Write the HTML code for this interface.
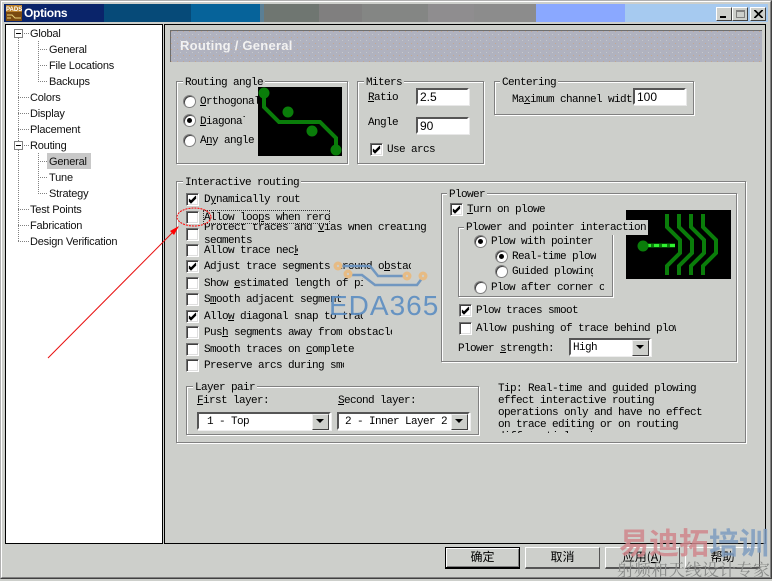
<!DOCTYPE html>
<html><head><meta charset="utf-8"><style>
html,body{margin:0;padding:0}
body{width:772px;height:579px;overflow:hidden;position:relative;background:#cdcfcb;font-family:"Liberation Mono","Noto Sans CJK SC",monospace;font-size:11px;letter-spacing:-.6px;color:#000}
div,span.a{position:absolute;box-sizing:border-box}
.t{white-space:nowrap;overflow:hidden;height:15px;line-height:16px}
.s{font-family:"Liberation Sans",sans-serif;font-size:11px;letter-spacing:-.2px;color:#111;white-space:nowrap;height:17px;line-height:18px}
.g{border:1px solid #808080;box-shadow:1px 1px 0 #fff,inset 1px 1px 0 #fff}
.l{background:#cdcfcb;padding:0 2px;white-space:nowrap;height:15px;line-height:16px}
.c{width:13px;height:13px;background:#fff;border:1px solid;border-color:#707070 #fff #fff #707070;box-shadow:inset 1px 1px 0 #404040,inset -1px -1px 0 #dfdfdf}
.c svg{position:absolute;left:1px;top:1px}
.r{width:13px;height:13px;border-radius:50%;background:#fff;border:1px solid #808080;box-shadow:inset 1px 1px 0 #404040}
.r.on::after{content:"";position:absolute;left:3px;top:3px;width:5px;height:5px;border-radius:50%;background:#000}
.i{background:#fff;border:2px solid;border-color:#555 #fff #fff #555;outline:0;box-shadow:1px 1px 0 #e8e8e8;font-family:"Liberation Sans",sans-serif;font-size:12px;letter-spacing:0;line-height:14px;padding-left:2px}
.sel{background:#fff;border:2px solid;border-color:#555 #fff #fff #555;box-shadow:1px 1px 0 #eee;height:18px}
.sel b{position:absolute;right:0;top:0;width:15px;height:14px;background:#cdcfcb;border:1px solid;border-color:#eee #404040 #404040 #eee}
.sel b::after{content:"";position:absolute;left:3px;top:4px;border:4px solid transparent;border-top:4px solid #000;border-bottom:0}
.b{top:547px;height:22px;border:1px solid #808080;border-top-color:#fff;border-left-color:#fff;border-bottom:2px solid #555;border-right:1px solid #555;font-family:"Noto Sans CJK SC",sans-serif;font-size:12px;letter-spacing:0;text-align:center;line-height:18px;color:#000}
u{text-decoration:underline}
</style></head><body>
<!-- window frame -->
<div style="left:0;top:0;width:772px;height:579px;border:1px solid #b0b0b0;border-right-color:#404040;border-bottom-color:#404040"></div>
<div style="left:1px;top:1px;width:770px;height:577px;border:1px solid #fff;border-right-color:#808080;border-bottom-color:#808080"></div>
<!-- title bar -->
<div style="left:4px;top:4px;width:100px;height:18px;background:#0a246a"></div>
<div style="left:104px;top:4px;width:87px;height:18px;background:#064a78"></div>
<div style="left:191px;top:4px;width:69px;height:18px;background:#06639a"></div>
<div style="left:260px;top:4px;width:4px;height:18px;background:#5a7f95"></div>
<div style="left:264px;top:4px;width:55px;height:18px;background:#6f7671"></div>
<div style="left:319px;top:4px;width:43px;height:18px;background:#807f7f"></div>
<div style="left:362px;top:4px;width:66px;height:18px;background:#848684"></div>
<div style="left:428px;top:4px;width:46px;height:18px;background:#8f8d8f"></div>
<div style="left:474px;top:4px;width:62px;height:18px;background:#8c8c8c"></div>
<div style="left:536px;top:4px;width:89px;height:18px;background:#8aa8ff"></div>
<div style="left:625px;top:4px;width:143px;height:18px;background:#a6caf0"></div>
<svg style="position:absolute;left:6px;top:5px" width="16" height="16"><rect width="16" height="16" fill="#7a4a10"/><rect y="0" width="16" height="7" fill="#b9802a"/><text x="0" y="6" font-family="Liberation Sans" font-size="6" font-weight="bold" fill="#fff" letter-spacing="0">PADS</text><path d="M1 10h5l3 3h6M1 13h4" stroke="#e8d27a" fill="none"/></svg>
<div style="left:24px;top:5px;height:16px;font:bold 12px/16px 'Liberation Sans',sans-serif;letter-spacing:-.3px;color:#fff">Options</div>
<div style="left:716px;top:7px;width:16px;height:14px;background:#cdcfcb;border:1px solid;border-color:#fff #404040 #404040 #fff"><span class="a" style="left:3px;bottom:2px;width:6px;height:2px;background:#000"></span></div>
<div style="left:732px;top:7px;width:16px;height:14px;background:#cdcfcb;border:1px solid;border-color:#fff #404040 #404040 #fff"><span class="a" style="left:3px;top:2px;width:9px;height:8px;border:1px solid #808080;border-top-width:2px"></span></div>
<div style="left:750px;top:7px;width:16px;height:14px;background:#cdcfcb;border:1px solid;border-color:#fff #404040 #404040 #fff"><svg style="position:absolute;left:3px;top:2px" width="9" height="8"><path d="M0 0L8 8M1 0L9 8M8 0L0 8M9 0L1 8" stroke="#000"/></svg></div>
<!-- tree -->
<div style="left:5px;top:24px;width:158px;height:520px;background:#fff;border:1px solid #000"></div>
<svg style="position:absolute;left:0;top:0" width="165" height="260">
<g stroke="#808080" stroke-dasharray="1 1" fill="none"><path d="M18.5 38V241M24 33.5h5M18 97.5h11M18 113.5h11M18 129.5h11M24 145.5h5M18 209.5h11M18 225.5h11M18 241.5h11"/><path d="M38.5 41V81M38 49.5h9M38 65.5h9M38 81.5h9M38.5 153V193M38 161.5h9M38 177.5h9M38 193.5h9"/></g>
<g fill="#fff" stroke="#808080"><rect x="14.500" y="29.500" width="8" height="8"/><rect x="14.500" y="141.500" width="8" height="8"/></g>
<path d="M16 33.500h5M16 145.500h5" stroke="#000"/>
</svg>
<div style="left:47px;top:153px;width:44px;height:16px;background:#c8c8c8"></div>
<div class="s" style="left:30px;top:25px">Global</div>
<div class="s" style="left:49px;top:41px">General</div>
<div class="s" style="left:49px;top:57px">File Locations</div>
<div class="s" style="left:49px;top:73px">Backups</div>
<div class="s" style="left:30px;top:89px">Colors</div>
<div class="s" style="left:30px;top:105px">Display</div>
<div class="s" style="left:30px;top:121px">Placement</div>
<div class="s" style="left:30px;top:137px">Routing</div>
<div class="s" style="left:49px;top:153px">General</div>
<div class="s" style="left:49px;top:169px">Tune</div>
<div class="s" style="left:49px;top:185px">Strategy</div>
<div class="s" style="left:30px;top:201px">Test Points</div>
<div class="s" style="left:30px;top:217px">Fabrication</div>
<div class="s" style="left:30px;top:233px">Design Verification</div>
<!-- right panel -->
<div style="left:164px;top:24px;width:602px;height:520px;border:1px solid #000;border-left-width:1px"></div>
<svg style="position:absolute;left:170px;top:30px" width="592" height="32"><defs><pattern id="d" width="6" height="6" patternUnits="userSpaceOnUse"><rect width="6" height="6" fill="#b0b2bf"/><rect x="1" y="1" width="1" height="1" fill="#c4a890"/><rect x="4" y="4" width="1" height="1" fill="#c6c8cc"/></pattern></defs><rect width="592" height="32" fill="url(#d)"/><path d="M0 .5H592M.5 0V32" stroke="#6e6e6e"/></svg>
<div style="left:180px;top:38px;height:16px;font:bold 13px/16px 'Liberation Sans',sans-serif;letter-spacing:.25px;color:#f2f2f2;white-space:nowrap">Routing / General</div>

<!-- Routing angle -->
<div class="g" style="left:176px;top:81px;width:172px;height:83px"></div>
<div class="l" style="left:183px;top:75px">Routing angle</div>
<div class="r" style="left:183px;top:95px"></div><div class="t" style="left:200px;top:94px;width:58px"><u>O</u>rthogonal</div>
<div class="r on" style="left:183px;top:114px"></div><div class="t" style="left:200px;top:114px;width:45px"><u>D</u>iagonal</div>
<div class="r" style="left:183px;top:134px"></div><div class="t" style="left:200px;top:133px">A<u>n</u>y angle</div>
<svg style="position:absolute;left:258px;top:87px" width="84" height="69"><rect width="84" height="69" fill="#000"/><path d="M6 6V20L21 35H62L78 51V63" stroke="#0a7d0a" stroke-width="4" fill="none"/><g fill="#0a7d0a"><circle cx="6" cy="6" r="5.500"/><circle cx="30" cy="25" r="5.500"/><circle cx="54" cy="44" r="5.500"/><circle cx="78" cy="63" r="5.500"/></g></svg>

<!-- Miters -->
<div class="g" style="left:357px;top:81px;width:127px;height:83px"></div>
<div class="l" style="left:364px;top:75px">Miters</div>
<div class="t" style="left:368px;top:90px"><u>R</u>atio</div>
<div class="t" style="left:368px;top:115px">An<u>g</u>le</div>
<div class="i" style="left:416px;top:88px;width:53px;height:17px">2.5</div>
<div class="i" style="left:416px;top:117px;width:53px;height:17px">90</div>
<div class="c" style="left:370px;top:143px"><svg width="9" height="9"><path d="M1 4l2 2 5-5M1 5l2 2 5-5M1 6l2 2 5-5" stroke="#000" fill="none"/></svg></div>
<div class="t" style="left:387px;top:142px">Use arcs</div>

<!-- Centering -->
<div class="g" style="left:494px;top:81px;width:200px;height:34px"></div>
<div class="l" style="left:500px;top:75px">Centering</div>
<div class="t" style="left:512px;top:92px;width:121px">Ma<u>x</u>imum channel width</div>
<div class="i" style="left:633px;top:88px;width:53px;height:17px">100</div>

<!-- Interactive routing -->
<div class="g" style="left:176px;top:181px;width:570px;height:262px"></div>
<div class="l" style="left:183px;top:175px">Interactive routing</div>

<div class="c" style="left:186px;top:193px"><svg width="9" height="9"><path d="M1 4l2 2 5-5M1 5l2 2 5-5M1 6l2 2 5-5" stroke="#000" fill="none"/></svg></div>
<div class="t" style="left:204px;top:192px;width:96px">D<u>y</u>namically routing</div>
<div class="c" style="left:186px;top:211px"></div>
<div class="t" style="left:204px;top:210px;width:126px">Allow loo<u>p</u>s when rerouting</div>
<div style="left:203px;top:210px;width:127px;height:14px;border:1px dotted #333"></div>
<div class="c" style="left:186px;top:228px"></div>
<div style="left:204px;top:224px;width:230px;height:19px;overflow:hidden"><div style="left:0;top:-2px;line-height:13px;white-space:nowrap">Protect traces and <u>v</u>ias when creating<br>segments</div></div>
<div class="c" style="left:186px;top:244px"></div>
<div class="t" style="left:204px;top:243px;width:94px">Allow trace nec<u>k</u>ing</div>
<div class="c" style="left:186px;top:260px"><svg width="9" height="9"><path d="M1 4l2 2 5-5M1 5l2 2 5-5M1 6l2 2 5-5" stroke="#000" fill="none"/></svg></div>
<div class="t" style="left:204px;top:259px;width:207px">Adjust trace segments around o<u>b</u>stacles</div>
<div class="c" style="left:186px;top:277px"></div>
<div class="t" style="left:204px;top:276px;width:159px">Show <u>e</u>stimated length of pins</div>
<div class="c" style="left:186px;top:293px"></div>
<div class="t" style="left:204px;top:292px;width:137px">S<u>m</u>ooth adjacent segments</div>
<div class="c" style="left:186px;top:310px"><svg width="9" height="9"><path d="M1 4l2 2 5-5M1 5l2 2 5-5M1 6l2 2 5-5" stroke="#000" fill="none"/></svg></div>
<div class="t" style="left:204px;top:309px;width:159px">Allo<u>w</u> diagonal snap to trace</div>
<div class="c" style="left:186px;top:326px"></div>
<div class="t" style="left:204px;top:325px;width:188px">Pus<u>h</u> segments away from obstacles</div>
<div class="c" style="left:186px;top:343px"></div>
<div class="t" style="left:204px;top:342px">Smooth traces on <u>c</u>omplete</div>
<div class="c" style="left:186px;top:359px"></div>
<div class="t" style="left:204px;top:358px;width:140px">Preserve arcs during smooth</div>

<!-- Plower -->
<div class="g" style="left:441px;top:193px;width:296px;height:169px"></div>
<div class="l" style="left:447px;top:187px">Plower</div>
<div class="c" style="left:450px;top:203px"><svg width="9" height="9"><path d="M1 4l2 2 5-5M1 5l2 2 5-5M1 6l2 2 5-5" stroke="#000" fill="none"/></svg></div>
<div class="t" style="left:467px;top:202px"><u>T</u>urn on plowe</div>
<svg style="position:absolute;left:626px;top:210px" width="105" height="69"><rect width="105" height="69" fill="#000"/><g stroke="#0a7d0a" stroke-width="4" fill="none"><path d="M41 4V17L54 30V43L41 56V65"/><path d="M53 4V17L66 30V43L53 56V65"/><path d="M65 4V17L78 30V43L65 56V65"/><path d="M77 4V17L90 30V43L77 56V65"/></g><path d="M18 35.500H49" stroke="#0a7d0a" stroke-width="4"/><path d="M20 35.500H49" stroke="#30f030" stroke-width="3" stroke-dasharray="5 3"/><circle cx="17" cy="36" r="5.500" fill="#0a7d0a"/></svg>
<div class="g" style="left:458px;top:227px;width:155px;height:70px"></div>
<div class="l" style="left:464px;top:220px;width:184px">Plower and pointer interaction</div>
<div class="r on" style="left:474px;top:235px"></div><div class="t" style="left:491px;top:234px">Plow with pointer</div>
<div class="r on" style="left:495px;top:250px"></div><div class="t" style="left:512px;top:249px">Real-time plow</div>
<div class="r" style="left:495px;top:265px"></div><div class="t" style="left:512px;top:264px;width:81px">Guided plowing</div>
<div class="r" style="left:474px;top:281px"></div><div class="t" style="left:491px;top:280px;width:113px">Plow after corner change</div>
<div class="c" style="left:459px;top:304px"><svg width="9" height="9"><path d="M1 4l2 2 5-5M1 5l2 2 5-5M1 6l2 2 5-5" stroke="#000" fill="none"/></svg></div>
<div class="t" style="left:476px;top:303px">Plow traces smoot</div>
<div class="c" style="left:459px;top:322px"></div>
<div class="t" style="left:476px;top:321px;width:200px">Allow pushing of trace behind plow</div>
<div class="t" style="left:458px;top:341px">Plower <u>s</u>trength:</div>
<div class="sel" style="left:569px;top:338px;width:82px"><span class="a" style="left:2px;top:1px;height:14px;line-height:14px">High</span><b></b></div>

<!-- Layer pair -->
<div class="g" style="left:186px;top:386px;width:293px;height:49px"></div>
<div class="l" style="left:193px;top:380px">Layer pair</div>
<div class="t" style="left:197px;top:393px"><u>F</u>irst layer:</div>
<div class="t" style="left:338px;top:393px"><u>S</u>econd layer:</div>
<div class="sel" style="left:197px;top:412px;width:134px"><span class="a" style="left:8px;top:1px;height:14px;line-height:14px">1 - Top</span><b></b></div>
<div class="sel" style="left:337px;top:412px;width:133px"><span class="a" style="left:6px;top:1px;height:14px;line-height:14px;white-space:nowrap">2 - Inner Layer 2</span><b></b></div>

<!-- Tip -->
<div style="left:498px;top:383px;width:240px;height:50px;overflow:hidden;line-height:12px;white-space:nowrap">Tip: Real-time and guided plowing<br>effect interactive routing<br>operations only and have no effect<br>on trace editing or on routing<br>differential pairs.</div>

<!-- Buttons -->
<div class="b" style="left:445px;width:75px;border:1px solid #000;border-bottom:2px solid #000;line-height:18px;background:#cdcfcb;box-shadow:inset 1px 1px 0 #fff,inset -1px -1px 0 #808080">确定</div>
<div class="b" style="left:525px;width:75px">取消</div>
<div class="b" style="left:605px;width:75px">应用(<u>A</u>)</div>
<div class="b" style="left:685px;width:75px">帮助</div>

<!-- watermark EDA365 -->
<svg style="position:absolute;left:320px;top:250px" width="130" height="80">
<path d="M17 16H50L58 26H87M29 25H42L55 35H97L103 27" stroke="#6c94bf" stroke-width="2.500" fill="none" opacity=".95"/>
<g fill="#e6bb84"><circle cx="18" cy="16" r="4.500"/><circle cx="28" cy="24" r="4.500"/><circle cx="87" cy="26" r="4.500"/><circle cx="103" cy="26" r="4.500"/></g>
<g fill="#cdcfcb"><circle cx="18" cy="16" r="1.200"/><circle cx="28" cy="24" r="1.200"/><circle cx="87" cy="26" r="1.200"/><circle cx="103" cy="26" r="1.200"/></g>
<text x="9" y="65" font-family="Liberation Sans" font-size="28" letter-spacing="1" fill="#5b8dc2" opacity=".9">EDA365</text>
</svg>

<!-- annotation -->
<svg style="position:absolute;left:0;top:0" width="772" height="579">
<ellipse cx="194" cy="217" rx="17" ry="9" fill="none" stroke="#f00" stroke-dasharray="2 1"/>
<path d="M48 358L178 227" stroke="#e81010" fill="none"/>
<path d="M179 226L170 231L174 235Z" fill="#f00"/>
</svg>

<!-- watermark -->
<div style="left:619px;top:524px;height:34px;font:bold 30px/34px 'Noto Sans CJK SC',sans-serif;letter-spacing:0;white-space:nowrap;opacity:.85"><span style="color:#d0878c">易迪拓</span><span style="color:#7f9dc0">培训</span></div>
<div style="left:617px;top:559px;height:20px;font:17px/20px 'Noto Serif CJK SC','Noto Sans CJK SC',serif;letter-spacing:0;color:#8a8c8a;white-space:nowrap">射频和天线设计专家</div>
</body></html>
